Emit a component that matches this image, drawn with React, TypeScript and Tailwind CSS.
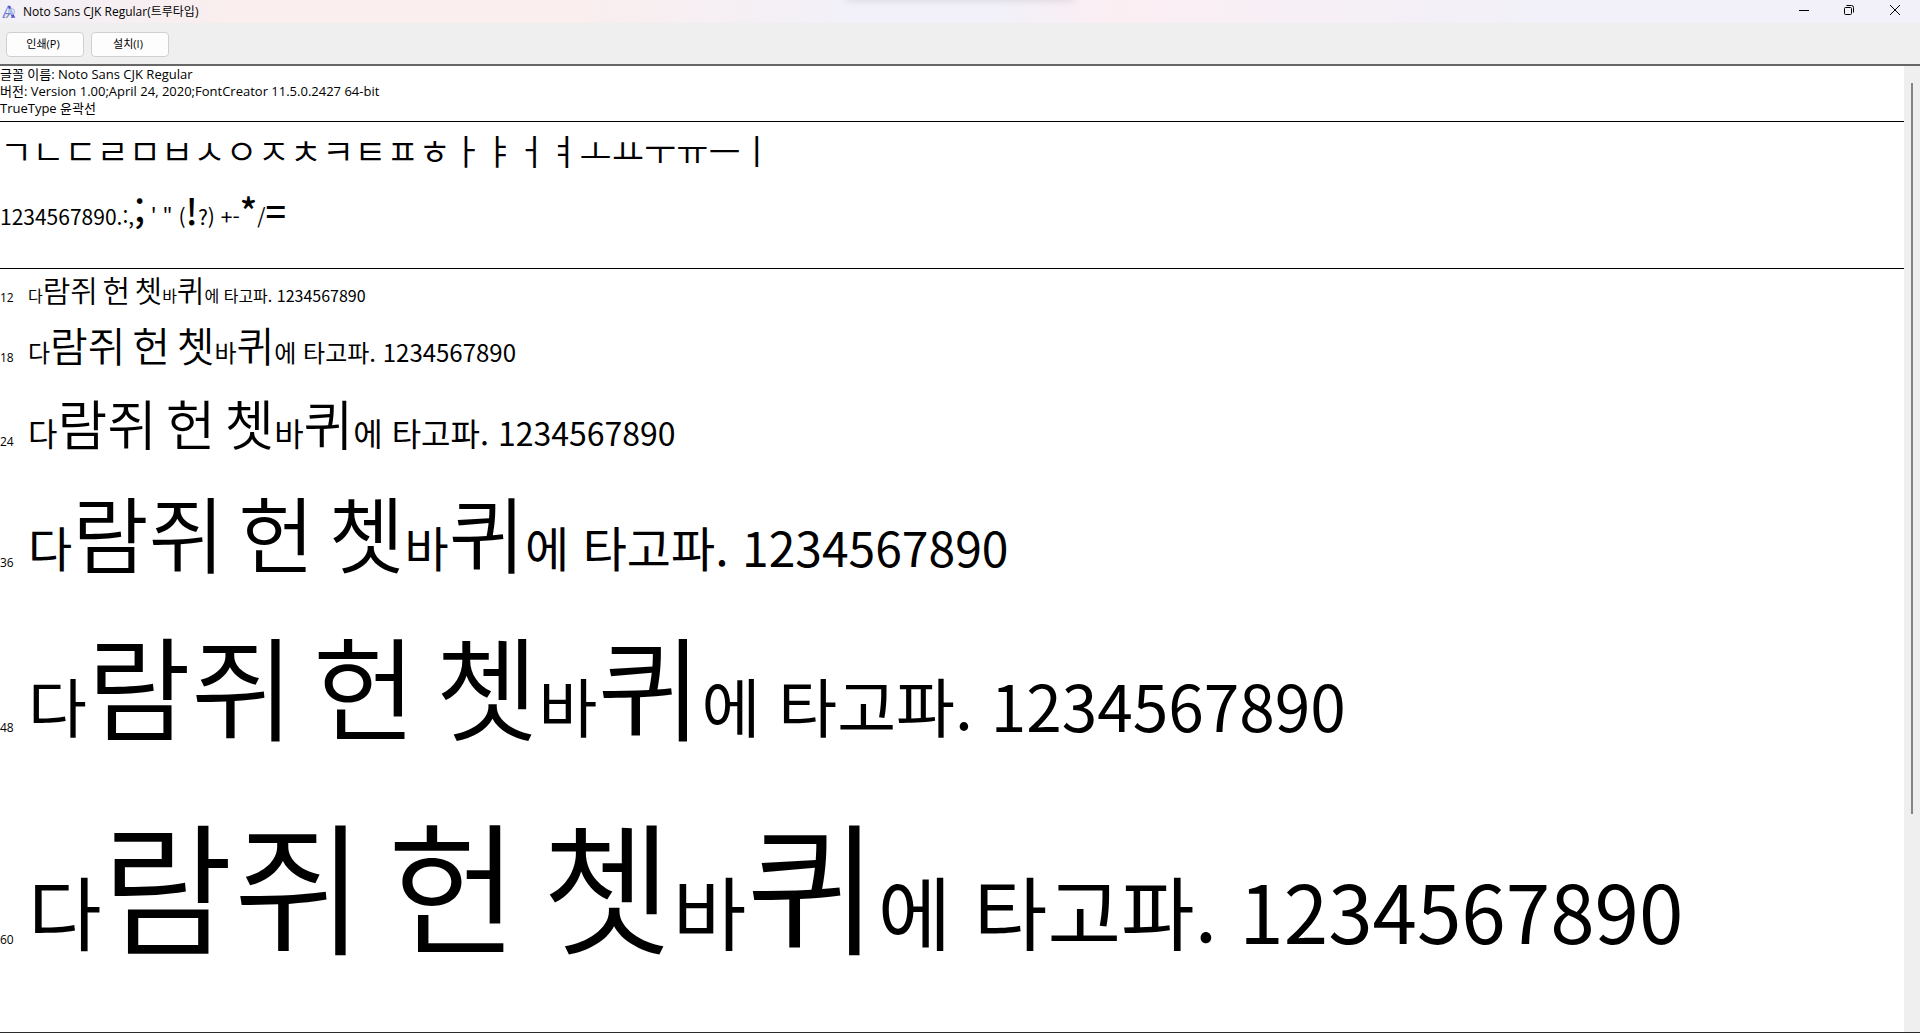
const JAMO = 'ㄱㄴㄷㄹㅁㅂㅅㅇㅈㅊㅋㅌㅍㅎㅏㅑㅓㅕㅗㅛㅜㅠㅡㅣ';

const SAMPLES = [
  { pt: 12, small: 'text-[16px]', big: 'text-[30px] leading-[40px] font-[350]' },
  { pt: 18, small: 'text-[24px]', big: 'text-[41px] leading-[70px] font-[350]' },
  { pt: 24, small: 'text-[32px]', big: 'text-[54px] leading-[88px] font-[350]' },
  { pt: 36, small: 'text-[48px]', big: 'text-[83px] leading-[128px] font-[350]' },
  { pt: 48, small: 'text-[64px]', big: 'text-[113px] leading-[176px] font-[350]' },
  { pt: 60, small: 'text-[80px]', big: 'text-[143px] leading-[222px] font-[350]' },
];

function AppIcon() {
  return (
    <svg viewBox="0 0 14 14" className="h-3.5 w-3.5" aria-hidden="true">
      <path d="M6.8 0.8 L2.4 12 H0.6 L1 10.6 L5.4 1.6Z" fill="#8d93e0" />
      <path d="M5.6 0.8 L8.2 0.8 L13 12.4 H9.8Z" fill="#4f55cf" />
      <circle cx="9.6" cy="6.6" r="3.1" fill="#cfe8f6" fillOpacity="0.7" stroke="#a3afcf" strokeWidth="0.8" />
      <path d="M3.4 8.6 H8.6" stroke="#6b74d8" strokeWidth="1.2" />
      <path d="M7.4 9 L4.4 12.8" stroke="#8a8fa8" strokeWidth="1.3" />
      <path d="M9 12.5 H13.2 M0.4 12.5 H3.4" stroke="#7b80dc" strokeWidth="1" />
    </svg>
  );
}

function TitleBar() {
  return (
    <header className="relative flex h-[23px] items-center justify-between overflow-hidden bg-[linear-gradient(90deg,#f2f0f7_0%,#faeeee_12%,#faeeee_30%,#f2f0f8_44%,#f2f0f8_52%,#fbeef3_58%,#f7eff5_66%,#f2f0f8_80%)]">
      <div className="absolute -top-2 left-[44%] h-2 w-[12%] rounded-lg shadow-[0_0_8px_#00000020]" />
      <div className="flex items-center gap-[7px] pl-0.5">
        <AppIcon />
        <h1 className="text-[12px] leading-none">Noto Sans CJK Regular(트루타입)</h1>
      </div>
      <div className="flex h-full pb-[3px] pr-0.5">
        <button aria-label="최소화" className="flex w-[45px] items-center justify-center">
          <svg viewBox="0 0 10 10" className="h-2.5 w-2.5" stroke="#000"><path d="M0 5.5H10" /></svg>
        </button>
        <button aria-label="이전 크기로 복원" className="flex w-[46px] items-center justify-center">
          <svg viewBox="0 0 10 10" className="h-2.5 w-2.5" stroke="#000" fill="none">
            <rect x="0.5" y="2.5" width="7" height="7" rx="1" />
            <path d="M2.5 0.5H7.5Q9.5 0.5 9.5 2.5V7.5" />
          </svg>
        </button>
        <button aria-label="닫기" className="flex w-[46px] items-center justify-center">
          <svg viewBox="0 0 10 10" className="h-2.5 w-2.5" stroke="#000"><path d="M0 0L10 10M10 0L0 10" /></svg>
        </button>
      </div>
    </header>
  );
}

export default function App() {
  const button = 'h-[25px] w-[78px] rounded border border-[#d0d0d0] bg-[#fdfdfd] pr-1 pb-0.5 text-[11px] leading-none';
  const mark = 'text-[36px] font-medium';
  return (
    <div lang="ko" className="flex h-screen flex-col overflow-hidden border-b border-[#2b2b2b] bg-white font-['Open_Sans','Noto_Sans_CJK_KR',sans-serif] text-black">
      <TitleBar />
      <div className="flex h-[43px] items-center gap-[7px] border-b-2 border-[#666] bg-[#efefef] pl-1.5 pt-0.5">
        <button className={button}>인쇄(P)</button>
        <button className={button}>설치(I)</button>
      </div>
      <div className="flex min-h-0 flex-1">
        <main className="min-w-0 flex-1 overflow-hidden whitespace-nowrap">
          <section className="h-14 border-b border-black text-[13px] leading-[17px]">
            <p>글꼴 이름: Noto Sans CJK Regular</p>
            <p>버전: Version 1.00;April 24, 2020;FontCreator 11.5.0.2427 64-bit</p>
            <p>TrueType 윤곽선</p>
          </section>
          <section className="h-[147px] border-b border-black font-['Noto_Sans_CJK_KR',sans-serif]">
            <p className="text-[35px] leading-[55px] font-[350]">{JAMO}</p>
            <p className="text-[21px] leading-[64px]">
              1234567890.:,<span className={mark}>;</span> ' " (<span className={mark}>!</span>?) +-
              <span className={mark}>*</span>/<span className={mark}>=</span>
            </p>
          </section>
          <section>
            {SAMPLES.map((s) => (
              <div key={s.pt} className="flex items-baseline">
                <span className="w-7 shrink-0 text-[12px] leading-none">{s.pt}</span>
                <p className={`${s.small} font-['Noto_Sans_CJK_KR',sans-serif]`}>
                  <span className="leading-none">다</span>
                  <span className={s.big}>람쥐</span> <span className={s.big}>헌</span> <span className={s.big}>쳇</span>
                  <span className="leading-none">바</span>
                  <span className={s.big}>퀴</span>
                  <span className="leading-none">에 타고파. 1234567890</span>
                </p>
              </div>
            ))}
          </section>
        </main>
        <div className="flex w-4 justify-center bg-[#efefef] pt-[17px]">
          <div className="h-[77%] w-0.5 bg-[#858585]" />
        </div>
      </div>
    </div>
  );
}
